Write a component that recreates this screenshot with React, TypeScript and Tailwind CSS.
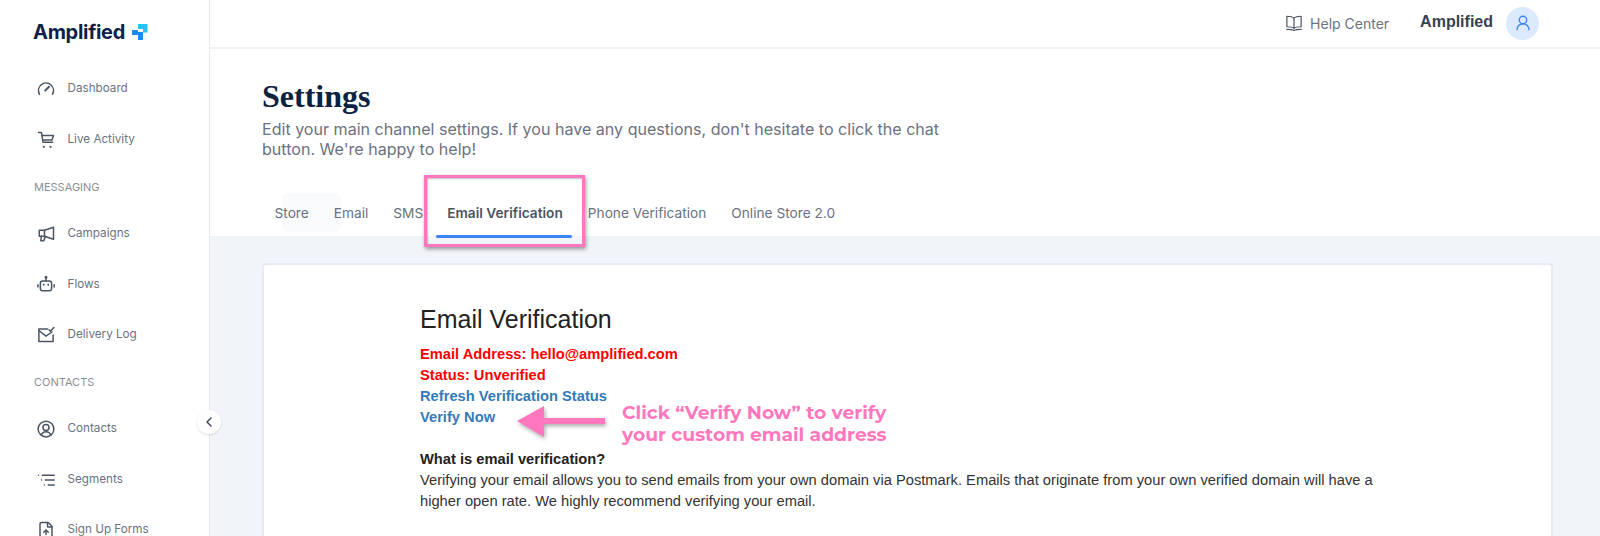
import React from "react";
import { FileUp, ChevronLeft, UserRound } from "lucide-react";

const Ico = ({ children }: { children: React.ReactNode }) => (
  <svg width="18" height="18" viewBox="0 0 24 24" fill="none" stroke="#4b5563" strokeWidth="2" strokeLinecap="round" strokeLinejoin="round" className="shrink-0">
    {children}
  </svg>
);

const icons: Record<string, React.ReactNode> = {
  gauge: (
    <>
      <path d="M3.34 19a10 10 0 1 1 17.32 0" />
      <path d="m11 14 5-5" strokeWidth="2.6" />
    </>
  ),
  cart: (
    <>
      <path d="M2 2h4l2 13h13" />
      <path d="M6.6 6H22l-2 6H7.6" />
      <path d="M9 21h.01M18 21h.01" strokeWidth="3" />
    </>
  ),
  mega: (
    <>
      <path d="M22 3v16L10 15H3V7h7z" />
      <path d="M10 7v8" />
      <path d="M6 15l-1 6h4l2-5.5" />
    </>
  ),
  bot: (
    <>
      <rect x="4.5" y="8" width="15" height="13" rx="3" />
      <path d="M12 4v4" />
      <circle cx="12" cy="3" r="1" fill="#4b5563" />
      <path d="M9 13h.01M15 13h.01" strokeWidth="2.6" />
      <path d="M1.2 13v3M22.8 13v3" />
    </>
  ),
  mail: (
    <>
      <path d="M14 4H2.5v16.5h19V12" />
      <path d="M2.5 6l9.5 7.5L20 8" />
      <path d="M16 5l2 2 4.5-5" />
    </>
  ),
  user: (
    <>
      <circle cx="12" cy="12" r="10.5" />
      <circle cx="12" cy="10" r="4" />
      <path d="M5.5 20c1.2-3 3.6-4.5 6.5-4.5s5.3 1.5 6.5 4.5" />
    </>
  ),
  seg: (
    <>
      <path d="M7 5.5h16M11 12h12M15 18.5h8" />
      <path d="M2 5.5h.01M6 12h.01M10 18.5h.01" />
    </>
  ),
};

const Item = ({ icon, label }: { icon: string; label: string }) => (
  <div className="flex h-[50.4px] items-center gap-[12.5px] pl-[37px] text-[11.7px] text-[#6b7280]">
    {icon === "file" ? <FileUp size={18} strokeWidth={2} className="shrink-0 text-[#4b5563]" /> : <Ico>{icons[icon]}</Ico>}
    <span>{label}</span>
  </div>
);

const Section = ({ label }: { label: string }) => (
  <div className="flex h-[44px] items-center pl-[34px] text-[11px] text-[#8b8f98]">{label}</div>
);

const tabs = ["Store", "Email", "SMS", "Email Verification", "Phone Verification", "Online Store 2.0"];

export default function App() {
  return (
    <div className="flex h-[536px] w-[1600px] overflow-hidden bg-[#f1f4f9] font-['Inter',sans-serif]">
      <aside className="relative z-10 w-[210px] shrink-0 border-r border-[#e5e7eb] bg-white">
        <div className="flex h-[64px] items-center gap-[7px] pl-[33px]">
          <span className="text-[20px] font-bold tracking-[-0.3px] text-[#0f1f4b]">Amplified</span>
          <svg width="16" height="16" viewBox="0 0 16 16">
            <path d="M6 0h9.500v8.500h-4.500V5H6z" fill="#22c3f3" />
            <rect x="0" y="6" width="6" height="5" fill="#1e88f5" />
            <rect x="6" y="8" width="5" height="8" fill="#1e88f5" />
          </svg>
        </div>
        <Item icon="gauge" label="Dashboard" />
        <Item icon="cart" label="Live Activity" />
        <Section label="MESSAGING" />
        <Item icon="mega" label="Campaigns" />
        <Item icon="bot" label="Flows" />
        <Item icon="mail" label="Delivery Log" />
        <Section label="CONTACTS" />
        <Item icon="user" label="Contacts" />
        <Item icon="seg" label="Segments" />
        <Item icon="file" label="Sign Up Forms" />
        <div className="absolute right-[-12px] top-[410px] flex h-[24px] w-[24px] items-center justify-center rounded-full bg-white shadow-sm">
          <ChevronLeft size={16} className="text-[#374151]" />
        </div>
      </aside>
      <main className="min-w-0 flex-1">
        <header className="flex h-[49px] items-center justify-end border-b-2 border-[#f1f2f5] bg-white pb-[1px] pr-[61px]">
          <svg width="18" height="18" viewBox="0 0 24 24" fill="none" stroke="#4b5563" strokeWidth="1.6" strokeLinejoin="round" strokeLinecap="round" className="mr-[7px]">
            <path d="M12 5.500C10 3.500 6.500 3 2.500 3v14c4 0 7.500.3 9.500 2 2-1.700 5.500-2 9.500-2V3c-4 0-7.500.5-9.500 2.500z" />
            <path d="M12 5.500V19" />
            <path d="M2.500 20.500c4 0 7.500.3 9.500 1.500 2-1.200 5.500-1.500 9.500-1.500" />
          </svg>
          <span className="mr-[31px] text-[14px] text-[#6b7280]">Help Center</span>
          <span className="mb-[2px] mr-[13px] font-['Liberation_Sans',sans-serif] text-[16px] font-bold text-[#374151]">Amplified</span>
          <div className="flex h-[33px] w-[33px] items-center justify-center rounded-full bg-[#dbeafe]">
            <UserRound size={18} strokeWidth={1.75} className="text-[#3b82f6]" />
          </div>
        </header>
        <section className="h-[187px] bg-white pl-[52px] pt-[29px]">
          <h1 className="mb-[5px] font-['Liberation_Serif',serif] text-[32px] font-bold leading-[36px] text-[#0b2240]">Settings</h1>
          <p className="w-[684px] text-[16.07px] leading-[20px] text-[#6b7280]">
            Edit your main channel settings. If you have any questions, don't hesitate to click the chat button. We're happy to help!
          </p>
          <nav className="relative mt-[30px] flex h-[47px] items-center pt-[2px] text-[13.7px] text-[#6b7280]">
            <div className="absolute left-[20px] top-[4px] h-[39px] w-[59px] rounded-[6px] bg-[#f8fafc]" />
            {tabs.map((t, i) => (
              <span key={t} className={`relative px-[12.5px] ${i === 3 ? "ml-[-1px] font-semibold text-[#4b5563]" : ""}`}>
                {t}
              </span>
            ))}
            <div className="absolute left-[162px] top-[-14px] h-[72px] w-[161px] border-[3px] border-[#ff78bd] shadow-[1px_2px_4px_rgba(0,0,0,0.4),inset_1px_1px_2px_rgba(0,0,0,0.25)]" />
            <div className="absolute left-[174px] top-[46px] h-[3px] w-[136px] rounded-full bg-[#3b82f6]" />
          </nav>
        </section>
        <section className="pl-[52px] pr-[47px] pt-[27px]">
          <div className="relative h-[300px] rounded-[4px] border-2 border-[#e6ebf3] bg-white pl-[156px] pt-[38px] font-['Liberation_Sans',sans-serif] text-[14.7px] leading-[21px]">
            <h2 className="text-[25px] leading-[32px] text-[#222]">Email Verification</h2>
            <div className="mt-[9px] font-bold text-[#ff0000]">Email Address: hello@amplified.com</div>
            <div className="font-bold text-[#ff0000]">Status: Unverified</div>
            <div className="font-bold text-[#337ab7]">Refresh Verification Status</div>
            <div className="font-bold text-[#337ab7]">Verify Now</div>
            <div className="mt-[21px] font-bold text-[#222]">What is email verification?</div>
            <p className="w-[960px] text-[#333]">
              Verifying your email allows you to send emails from your own domain via Postmark. Emails that originate from your own verified domain will have a higher open rate. We highly recommend verifying your email.
            </p>
            <svg className="absolute left-[253px] top-[141px]" width="92" height="36" viewBox="0 0 92 36">
              <path d="M0 15 L27 0 V12 H88 V18 H27 V31 Z" fill="#ff78bd" style={{ filter: "drop-shadow(1px 2px 2px rgba(0,0,0,.35))" }} />
            </svg>
            <div className="absolute left-[358px] top-[137px] font-['Montserrat','Inter',sans-serif] text-[18.7px] font-bold leading-[22px] text-[#ff78bd]">
              Click “Verify Now” to verify<br />your custom email address
            </div>
          </div>
        </section>
      </main>
    </div>
  );
}
